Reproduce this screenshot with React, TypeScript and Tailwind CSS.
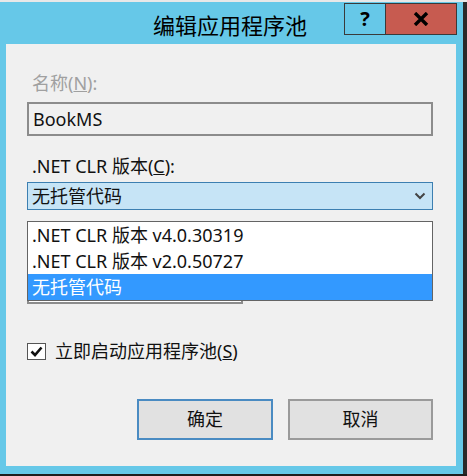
import React from "react";

const font = { fontFamily: '"Noto Sans", "Noto Sans CJK SC", sans-serif' };

export default function App() {
  return (
    <div
      className="w-[467px] h-[476px] overflow-hidden bg-[#1e1e1e] flex flex-col"
      style={font}
    >
      <div className="h-[2px] bg-[#e8e8e8] shrink-0" />
      <div className="flex h-[472px] shrink-0">
        <div className="w-[463px] bg-[#66c8e8] flex flex-col pl-[6px] pr-[7px] pb-[8px]">
          {/* Title bar */}
          <div className="h-[42px] grid shrink-0">
            <div className="[grid-area:1/1] flex justify-center items-center pt-[4px] pr-[2px] text-[22px] text-black leading-none">
              编辑应用程序池
            </div>
            <div className="[grid-area:1/1] flex justify-end items-start pt-[1px] mr-[-1px]">
              <div className="flex h-[32px] border border-[#3a3a3a]">
                <div className="w-[41px] flex items-center justify-center border-r border-[#3a3a3a] text-[20px] font-bold text-black">
                  ?
                </div>
                <div className="w-[70px] bg-[#c75b50] flex items-center justify-center">
                  <svg width="16" height="14" viewBox="0 0 16 14">
                    <path d="M2 1 L14 13 M14 1 L2 13" stroke="#000" strokeWidth="3.4" />
                  </svg>
                </div>
              </div>
            </div>
          </div>
          {/* Content */}
          <div className="flex-1 bg-[#f0f0f0] flex flex-col pl-[21px] pr-[23px] relative">
            <div className="mt-[28px] pl-[5px] text-[18px] leading-[22px] text-[#a0a0a0]">
              名称(<span className="underline">N</span>):
            </div>
            <div className="mt-[8px] h-[34px] border-2 border-[#8c8c8c] flex items-center pl-[4px] text-[18px] text-[#111]">
              BookMS
            </div>
            <div className="mt-[19px] pl-[5px] text-[18px] leading-[22px] text-[#111]">
              .NET CLR 版本(<span className="underline">C</span>):
            </div>
            <div className="mt-[5px] h-[28px] border border-[#3c7fb1] bg-[#c6e4f6] flex items-center justify-between pl-[4px] pr-[6px] text-[18px] text-[#111]">
              <span>无托管代码</span>
              <svg width="12" height="8" viewBox="0 0 12 8">
                <path d="M1.5 1.5 L6 6 L10.5 1.5" stroke="#444" strokeWidth="2" fill="none" />
              </svg>
            </div>
            {/* Underlying control partly hidden by dropdown */}
            <div className="mt-[60px] h-[34px] w-[216px] border-2 border-[#8c8c8c] bg-white" />
            {/* Dropdown list */}
            <div className="absolute left-[21px] right-[23px] top-[177px] h-[80px] border border-[#646464] bg-white flex flex-col text-[18px] text-[#111]">
              <div className="h-[26px] flex items-center pl-[4px]">.NET CLR 版本 v4.0.30319</div>
              <div className="h-[26px] flex items-center pl-[4px]">.NET CLR 版本 v2.0.50727</div>
              <div className="h-[26px] flex items-center pl-[4px] bg-[#3399ff] text-white">无托管代码</div>
            </div>
            {/* Checkbox */}
            <div className="mt-[36px] flex items-center gap-[9px]">
              <div className="w-[19px] h-[17px] border border-[#555] bg-white flex items-center justify-center">
                <svg width="13" height="11" viewBox="0 0 13 11">
                  <path d="M1.5 5.5 L5 9 L11.5 1.5" stroke="#111" strokeWidth="2.6" fill="none" />
                </svg>
              </div>
              <span className="text-[18px] leading-[22px] text-[#111]">
                立即启动应用程序池(<span className="underline">S</span>)
              </span>
            </div>
            {/* Buttons */}
            <div className="mt-[37px] flex justify-end gap-[15px]">
              <div className="w-[136px] h-[41px] border-2 border-[#4a8bc2] bg-[#e1e1e1] flex items-center justify-center text-[18px] text-[#111]">
                确定
              </div>
              <div className="w-[145px] h-[41px] border-2 border-[#9a9a9a] bg-[#e1e1e1] flex items-center justify-center text-[18px] text-[#111]">
                取消
              </div>
            </div>
          </div>
        </div>
        <div className="flex-1 bg-[#2a2a2a]" />
      </div>
    </div>
  );
}
